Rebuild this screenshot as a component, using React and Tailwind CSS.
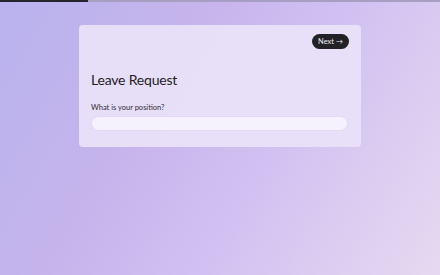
import React from "react";

export default function App() {
  return (
    <div
      className="relative w-[440px] h-[275px] overflow-hidden bg-[linear-gradient(120deg,#b9b3ee_0%,#c6b4ec_35%,#d1c1f2_60%,#e6d9f0_100%)]"
      style={{ fontFamily: "Lato, 'Noto Sans', sans-serif" }}
    >
      <div className="flex h-[2px] w-full">
        <div className="w-[88px] bg-[#26242c]" />
        <div className="flex-1 bg-[#a79fc2]" />
      </div>
      <div className="mx-auto mt-[23px] w-[282px] h-[122px] rounded-[4px] bg-[#e9e1f8]/95 px-[12px] pt-[9px] flex flex-col">
        <div className="flex justify-end">
          <button className="h-[15px] px-[6px] rounded-full bg-[#222126] text-[#ecebf0] text-[7.5px] flex items-center gap-[2px] leading-none">
            <span>Next</span>
            <span className="text-[7px]">→</span>
          </button>
        </div>
        <h1 className="mt-[24px] text-[14px] leading-none text-[#1f1d24] tracking-[-0.2px]">
          Leave Request
        </h1>
        <label className="mt-[17px] text-[7.5px] font-normal text-[#2f2c36] leading-none">
          What is your position?
        </label>
        <div className="mt-[4px] h-[15px] w-[257px] rounded-full bg-[#f6f2fd] border border-[#e2d9f3]" />
      </div>
    </div>
  );
}
